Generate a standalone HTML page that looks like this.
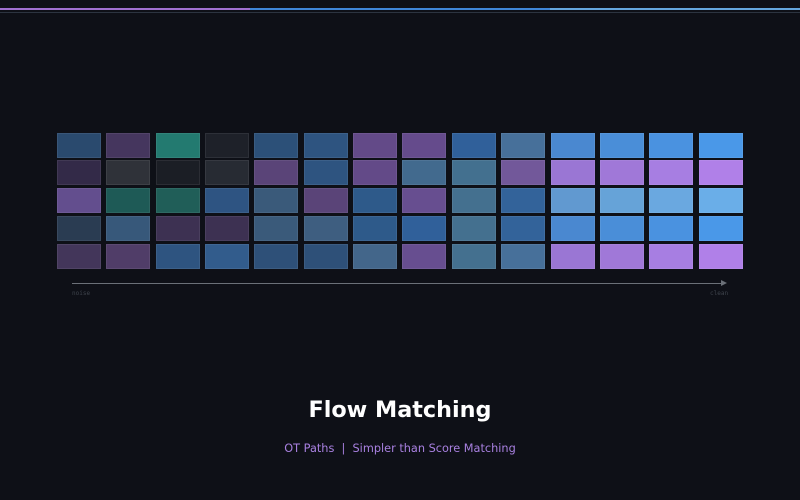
<!DOCTYPE html>
<html><head><style>
body{margin:0;width:800px;height:500px;background:#0e1017;position:relative;overflow:hidden;font-family:"DejaVu Sans",sans-serif}
.c{position:absolute;width:42px;height:23px;border:1px solid rgba(255,255,255,0.07);box-sizing:content-box}
</style></head><body>
<div style="position:absolute;top:8px;left:0;width:250px;height:2px;background:#a070d0"></div>
<div style="position:absolute;top:8px;left:250px;width:300px;height:2px;background:#3f86d8"></div>
<div style="position:absolute;top:8px;left:550px;width:250px;height:2px;background:#64a6de"></div>
<div style="position:absolute;top:12px;left:0;width:800px;height:1px;background:#2c3440"></div>
<div id="g"></div>
<div style="position:absolute;top:283px;left:72px;width:650px;height:1px;background:#6b7078"></div>
<div style="position:absolute;top:280px;left:721px;width:0;height:0;border-left:6px solid #6b7078;border-top:3px solid transparent;border-bottom:3px solid transparent"></div>
<div style="position:absolute;top:290px;left:72px;font:6px 'DejaVu Sans Mono',monospace;color:#3e434c">noise</div>
<div style="position:absolute;top:290px;left:710px;font:6px 'DejaVu Sans Mono',monospace;color:#3e434c">clean</div>
<div style="position:absolute;top:397px;left:0;width:800px;text-align:center;font-weight:bold;font-size:22.3px;color:#fff">Flow Matching</div>
<div style="position:absolute;top:442px;left:0;width:800px;text-align:center;font-size:11.3px;color:#a880e0;white-space:pre">OT Paths  |  Simpler than Score Matching</div>
<script>
var C=[
["#2a4a6e","#45365e","#237a70","#1e2129","#2c5078","#2e5480","#634a88","#654b8c","#30609a","#47709a","#4a88d0","#4a8ed8","#4a92e0","#4a98e8"],
["#332a48","#2f3239","#1b1e25","#272b33","#5a4478","#2e5480","#634a88","#426a8e","#43708f","#72589a","#9a76d4","#a078d8","#a77ee2","#b080e8"],
["#634e8e","#1e5a56","#205e58","#2e5482","#3a5a7a","#5a4478","#2e5a8a","#674e90","#44708f","#33639a","#6199d0","#66a3d8","#6aa8e0","#6aaee8"],
["#2a3c52","#37587a","#3d3152","#3d3152","#3a5a7a","#3e5e80","#2e5a8a","#30609a","#44708f","#33639a","#4a88d0","#4a8ed8","#4a92e0","#4a98e8"],
["#43365a","#503d68","#2e5480","#325c8c","#2e5078","#2e5078","#43668a","#674e90","#44708f","#47709a","#9a76d4","#a078d8","#a77ee2","#b080e8"]];
var h="";
for(var r=0;r<5;r++)for(var c=0;c<14;c++){h+='<div class="c" style="left:'+Math.round(57+c*49.35)+'px;top:'+Math.round(132.5+r*27.75)+'px;background:'+C[r][c]+'"></div>';}
document.getElementById("g").innerHTML=h;
</script>
</body></html>
